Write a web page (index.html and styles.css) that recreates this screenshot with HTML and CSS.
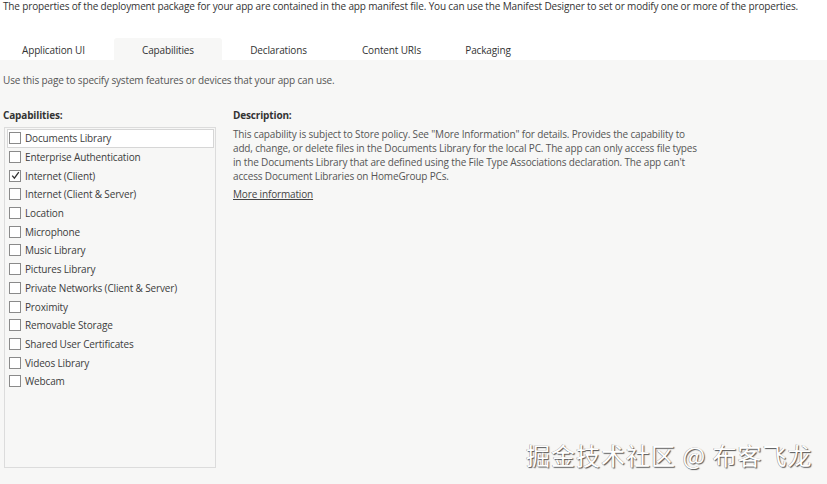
FILE: index.html
```html
<!DOCTYPE html>
<html>
<head>
<meta charset="utf-8">
<link rel="stylesheet" href="styles.css">
</head>
<body>
<div class="header">
  <p class="intro">The properties of the deployment package for your app are contained in the app manifest file. You can use the Manifest Designer to set or modify one or more of the properties.</p>
  <div class="tabs">
    <div class="tab t1">Application UI</div>
    <div class="tab t2 active">Capabilities</div>
    <div class="tab t3">Declarations</div>
    <div class="tab t4">Content URIs</div>
    <div class="tab t5">Packaging</div>
  </div>
</div>
<div class="content">
  <p class="hint">Use this page to specify system features or devices that your app can use.</p>
  <div class="columns">
    <div class="left">
      <div class="label">Capabilities:</div>
      <div class="listbox">
        <div class="item selected"><span class="cb"></span>Documents Library</div>
        <div class="item"><span class="cb"></span>Enterprise Authentication</div>
        <div class="item"><span class="cb checked"><svg width="9" height="9" viewBox="0 0 9 9"><path d="M1.2 4.6 L3.4 7.2 L7.8 1.2" fill="none" stroke="#333" stroke-width="1.3"/></svg></span>Internet (Client)</div>
        <div class="item"><span class="cb"></span>Internet (Client &amp; Server)</div>
        <div class="item"><span class="cb"></span>Location</div>
        <div class="item"><span class="cb"></span>Microphone</div>
        <div class="item"><span class="cb"></span>Music Library</div>
        <div class="item"><span class="cb"></span>Pictures Library</div>
        <div class="item"><span class="cb"></span>Private Networks (Client &amp; Server)</div>
        <div class="item"><span class="cb"></span>Proximity</div>
        <div class="item"><span class="cb"></span>Removable Storage</div>
        <div class="item"><span class="cb"></span>Shared User Certificates</div>
        <div class="item"><span class="cb"></span>Videos Library</div>
        <div class="item"><span class="cb"></span>Webcam</div>
      </div>
    </div>
    <div class="right">
      <div class="label">Description:</div>
      <p class="desc">This capability is subject to Store policy. See "More Information" for details. Provides the capability to add, change, or delete files in the Documents Library for the local PC. The app can only access file types in the Documents Library that are defined using the File Type Associations declaration. The app can't access Document Libraries on HomeGroup PCs.</p>
      <a class="more">More information</a>
    </div>
  </div>
  <div class="watermark">掘金技术社区 @ 布客飞龙</div>
</div>
</body>
</html>
```
FILE: styles.css
```css
html, body {
  margin: 0;
  padding: 0;
}
body {
  width: 827px;
  height: 484px;
  overflow: hidden;
  background: #f7f7f6;
  font-family: "Open Sans", "Noto Sans", sans-serif;
  color: #3c3c3c;
  font-size: 10px;
  letter-spacing: -0.15px;
  position: relative;
}
.header {
  background: #ffffff;
  height: 60px;
  display: flex;
  flex-direction: column;
}
.intro {
  margin: 0;
  padding: 0 0 0 3px;
  line-height: 13px;
  height: 38px;
  white-space: nowrap;
  color: #333;
}
.tabs {
  display: flex;
  height: 22px;
}
.tab {
  display: flex;
  align-items: center;
  justify-content: center;
  color: #333;
  padding-top: 1px;
  box-sizing: border-box;
}
.t1 { width: 114px; justify-content: flex-start; padding-left: 22px; }
.t2 { width: 108px; }
.t3 { width: 113px; }
.t4 { width: 113px; }
.t5 { width: 80px; }
.tab.active {
  background: #f7f7f6;
  border-radius: 3px 3px 0 0;
}
.hint {
  margin: 0;
  padding: 14px 0 0 3px;
  line-height: 13px;
  color: #555;
}
.columns {
  display: flex;
  margin-top: 21px;
}
.left {
  width: 233px;
  padding-left: 3px;
  box-sizing: border-box;
}
.label {
  font-weight: bold;
  color: #333;
  line-height: 14px;
  margin-bottom: 5px;
}
.listbox {
  width: 212px;
  height: 341px;
  border: 1px solid #dcdcdc;
  box-sizing: border-box;
  margin-left: 1px;
  padding: 1px 1px 0 2px;
}
.item {
  height: 18.7px;
  display: flex;
  align-items: center;
  color: #3c3c3c;
  box-sizing: border-box;
  padding-left: 2px;
  white-space: nowrap;
}
.item.selected {
  background: #ffffff;
  border: 1px solid #d6d6d6;
  padding-left: 1px;
}
.cb {
  width: 10px;
  height: 10px;
  border: 1px solid #8a8a8a;
  background: #fff;
  margin-right: 4px;
  display: flex;
  align-items: center;
  justify-content: center;
  flex: none;
}
.right {
  flex: 1;
}
.desc {
  margin: 0;
  width: 470px;
  line-height: 14px;
  color: #555;
}
.more {
  display: inline-block;
  margin-top: 4px;
  text-decoration: underline;
  color: #444;
}
.watermark {
  position: absolute;
  left: 526px;
  top: 437px;
  font-family: "Noto Sans CJK SC", sans-serif;
  font-size: 24px;
  letter-spacing: 1px;
  color: #ffffff;
  text-shadow: 1px 1px 1px #555, -0.5px -0.5px 0 #999;
}
```
